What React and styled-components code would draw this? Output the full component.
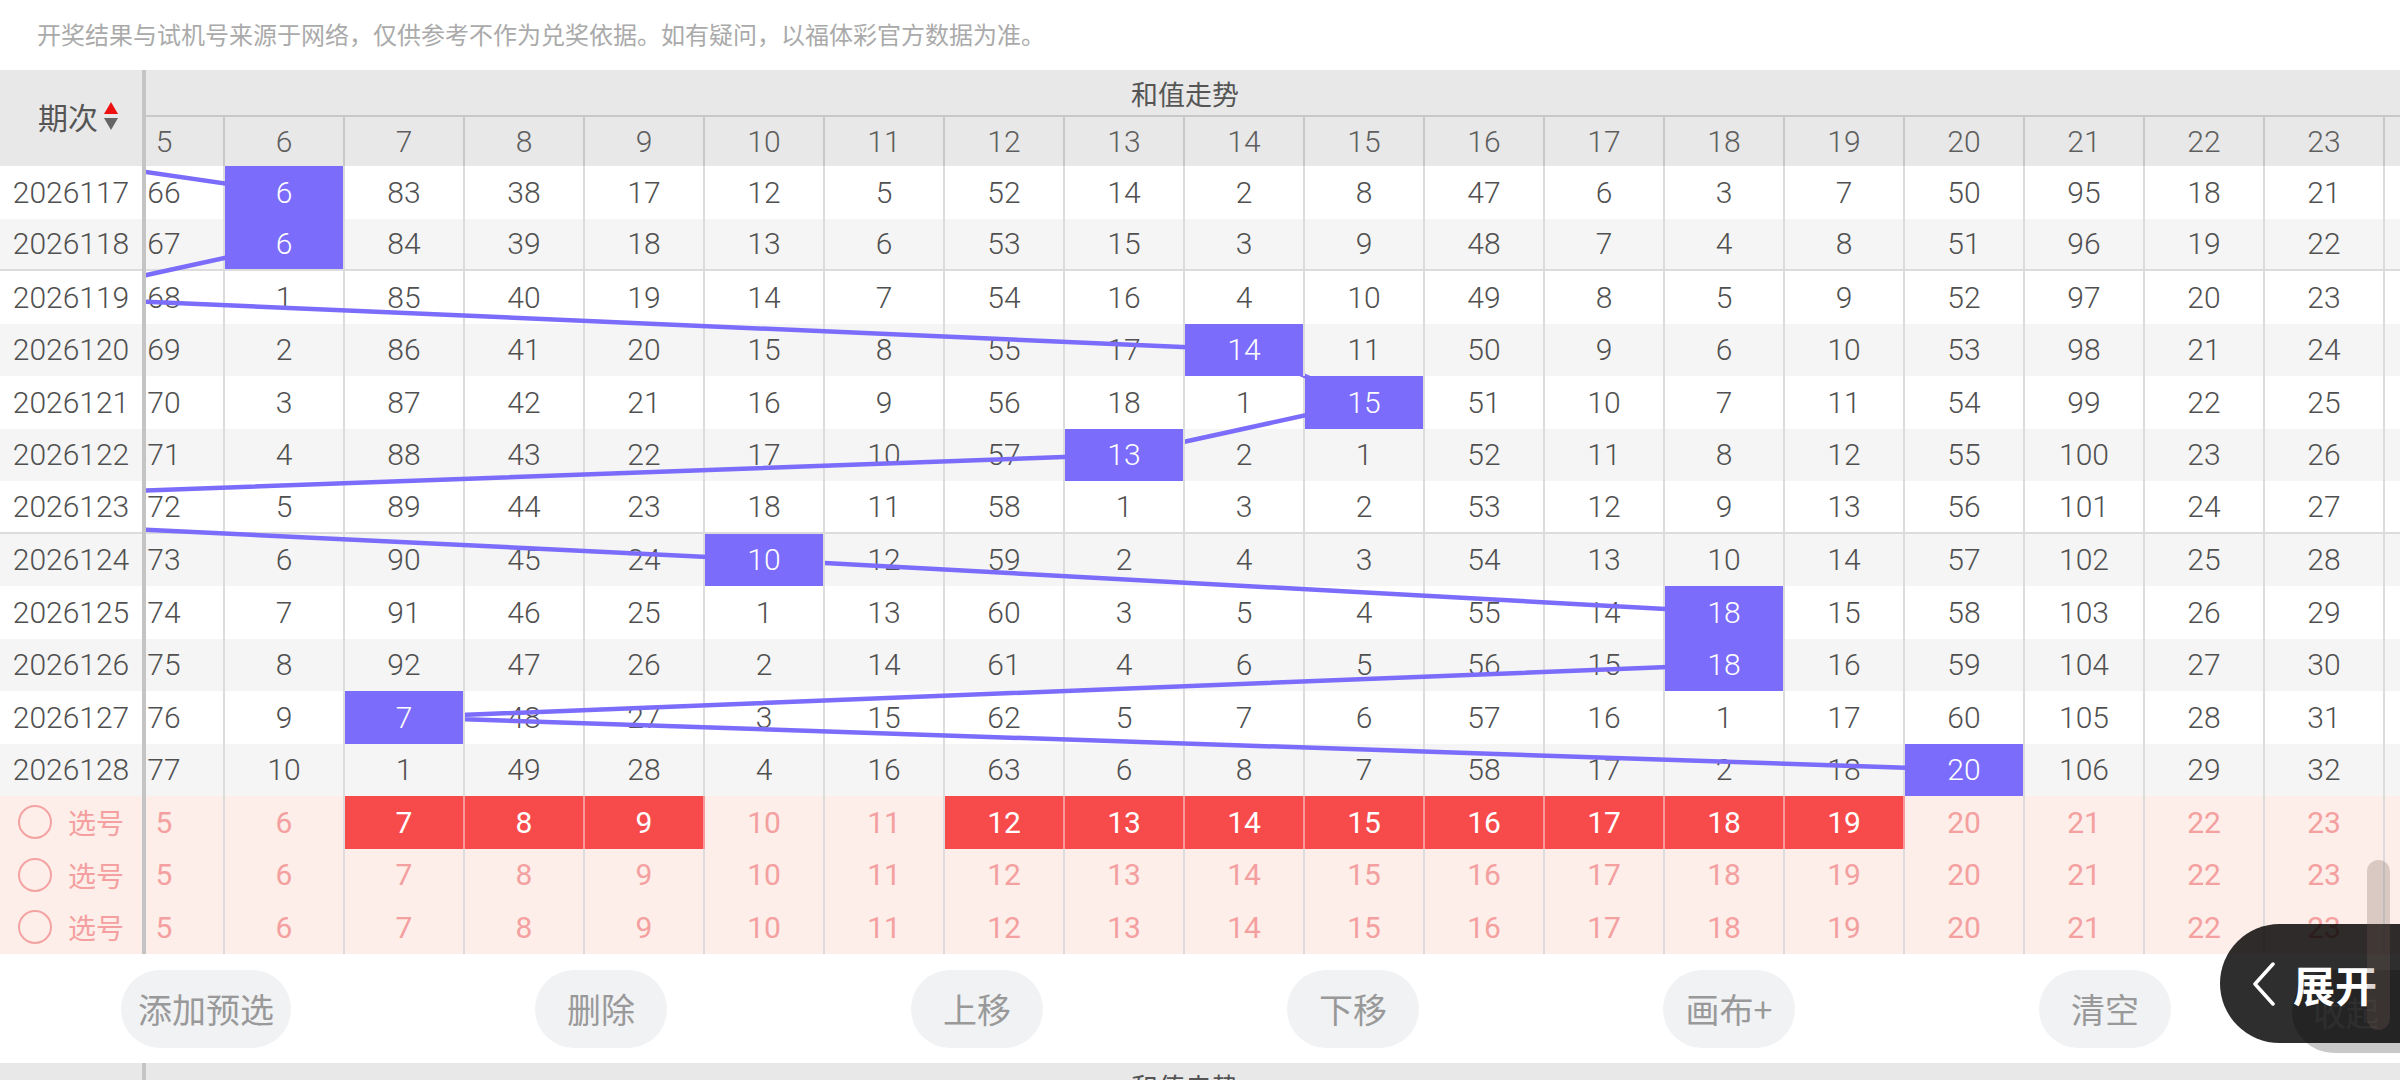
import React from 'react';
import styled, { createGlobalStyle, css } from 'styled-components';

const GlobalStyle = createGlobalStyle`
  html, body { margin: 0; padding: 0; background: #fff; overflow: hidden; }
  body { font-family: Roboto, "Noto Sans CJK SC", "Noto Sans", sans-serif; }
  * { box-sizing: border-box; }
`;

const COL_W = 120;
const ROW_H = 52.5;
const NUM_COLS = 28;
const SCROLL = 641;
const CONTENT_W = COL_W * NUM_COLS;
const HIGHLIGHT = '#7b6cfb';

const visibleRows = [
  ['2026117', [66, 6, 83, 38, 17, 12, 5, 52, 14, 2, 8, 47, 6, 3, 7, 50, 95, 18, 21]],
  ['2026118', [67, 6, 84, 39, 18, 13, 6, 53, 15, 3, 9, 48, 7, 4, 8, 51, 96, 19, 22]],
  ['2026119', [68, 1, 85, 40, 19, 14, 7, 54, 16, 4, 10, 49, 8, 5, 9, 52, 97, 20, 23]],
  ['2026120', [69, 2, 86, 41, 20, 15, 8, 55, 17, 14, 11, 50, 9, 6, 10, 53, 98, 21, 24]],
  ['2026121', [70, 3, 87, 42, 21, 16, 9, 56, 18, 1, 15, 51, 10, 7, 11, 54, 99, 22, 25]],
  ['2026122', [71, 4, 88, 43, 22, 17, 10, 57, 13, 2, 1, 52, 11, 8, 12, 55, 100, 23, 26]],
  ['2026123', [72, 5, 89, 44, 23, 18, 11, 58, 1, 3, 2, 53, 12, 9, 13, 56, 101, 24, 27]],
  ['2026124', [73, 6, 90, 45, 24, 10, 12, 59, 2, 4, 3, 54, 13, 10, 14, 57, 102, 25, 28]],
  ['2026125', [74, 7, 91, 46, 25, 1, 13, 60, 3, 5, 4, 55, 14, 18, 15, 58, 103, 26, 29]],
  ['2026126', [75, 8, 92, 47, 26, 2, 14, 61, 4, 6, 5, 56, 15, 18, 16, 59, 104, 27, 30]],
  ['2026127', [76, 9, 7, 48, 27, 3, 15, 62, 5, 7, 6, 57, 16, 1, 17, 60, 105, 28, 31]],
  ['2026128', [77, 10, 1, 49, 28, 4, 16, 63, 6, 8, 7, 58, 17, 2, 18, 20, 106, 29, 32]],
];

const hits = [6, 6, 4, 14, 15, 13, 1, 10, 18, 18, 7, 20];
const prevHit = 3;
const hiddenBase = { 0: 212, 1: 31, 2: 118, 3: 0, 4: 40, 24: 137, 25: 58, 26: 296, 27: 451 };

const rows = (() => {
  const counters = { ...hiddenBase };
  return visibleRows.map(([issue, vis], i) => {
    const cells = [];
    for (let c = 0; c < NUM_COLS; c++) {
      if (c >= 5 && c <= 23) {
        cells.push(vis[c - 5]);
      } else if (hits[i] === c) {
        counters[c] = 0;
        cells.push(c);
      } else {
        counters[c] += 1;
        cells.push(counters[c]);
      }
    }
    return { issue, cells, hit: hits[i], stripe: i % 2 === 1, sep: i === 1 || i === 6 };
  });
})();

const picked = new Set([7, 8, 9, 12, 13, 14, 15, 16, 17, 18, 19]);
const pickRows = [picked, new Set(), new Set()];

const trendPoints = [
  [prevHit * COL_W + COL_W / 2, -ROW_H / 2],
  ...hits.map((v, i) => [v * COL_W + COL_W / 2, i * ROW_H + ROW_H / 2]),
]
  .map(([x, y]) => `${x},${y}`)
  .join(' ');

/* ---------- layout ---------- */

const Page = styled.div`
  position: relative;
  width: 2400px;
`;

const Notice = styled.div`
  height: 70px;
  display: flex;
  align-items: center;
  padding: 0 0 4px 37px;
  font-family: "Noto Sans CJK SC", sans-serif;
  font-size: 24px;
  color: #aaaaaa;
`;

const Table = styled.div`
  display: flex;
  width: 2400px;
`;

const LeftCol = styled.div`
  flex: 0 0 146px;
  border-right: 4px solid #c4c4c4;
`;

const RightPane = styled.div`
  flex: 1;
  overflow: hidden;
`;

const ScrollContent = styled.div`
  width: ${CONTENT_W}px;
  margin-left: -${SCROLL}px;
`;

/* ---------- header ---------- */

const CornerCell = styled.div`
  height: 96px;
  background: #e8e8e8;
  display: flex;
  align-items: center;
  justify-content: center;
  gap: 6px;
  padding: 0 0 4px 14px;
  font-family: "Noto Sans CJK SC", sans-serif;
  font-size: 30px;
  color: #555;
`;

const SortIcon = styled.span`
  display: flex;
  flex-direction: column;
  gap: 4px;
  &::before,
  &::after {
    content: '';
    width: 0;
    height: 0;
    border-left: 7px solid transparent;
    border-right: 7px solid transparent;
  }
  &::before { border-bottom: 12px solid #ee1111; }
  &::after { border-top: 12px solid #666; }
`;

const TitleRow = styled.div`
  height: 47px;
  background: #e8e8e8;
  border-bottom: 2px solid #c8c8c8;
  display: flex;
  align-items: center;
  justify-content: center;
  padding-top: 1px;
  font-family: "Noto Sans CJK SC", sans-serif;
  font-size: 27px;
  color: #555;
`;

const HeadRow = styled.div`
  height: 49px;
  display: flex;
  background: #e8e8e8;
`;

const digitFont = css`
  font-family: Roboto, "Noto Sans", sans-serif;
  font-weight: 300;
  font-size: 30px;
`;

const HeadCell = styled.div`
  flex: 0 0 ${COL_W}px;
  border-right: 2px solid #c8c8c8;
  display: flex;
  align-items: center;
  justify-content: center;
  ${digitFont};
  color: #5e5e5e;
`;

/* ---------- body ---------- */

const rowBase = css`
  height: ${ROW_H}px;
  background: ${(p) => (p.$stripe ? '#f5f5f5' : '#fff')};
  border-bottom: ${(p) => (p.$sep ? '2px solid #dcdcdc' : 'none')};
`;

const IssueCell = styled.div`
  ${rowBase};
  display: flex;
  align-items: center;
  justify-content: center;
  ${digitFont};
  color: #505050;
`;

const Body = styled.div`
  position: relative;
`;

const DataRow = styled.div`
  ${rowBase};
  display: flex;
`;

const Cell = styled.div`
  flex: 0 0 ${COL_W}px;
  border-right: 2px solid #dcdcdc;
  display: flex;
  align-items: center;
  justify-content: center;
  ${digitFont};
  color: #505050;
  ${(p) =>
    p.$hit &&
    css`
      position: relative;
      z-index: 2;
      background: ${HIGHLIGHT};
      color: #fff;
    `}
`;

const TrendSvg = styled.svg`
  position: absolute;
  top: 0;
  left: 0;
  z-index: 1;
  pointer-events: none;
`;

/* ---------- pick rows ---------- */

const PickLabel = styled.div`
  height: ${ROW_H}px;
  background: #fdeee9;
  display: flex;
  align-items: center;
  gap: 16px;
  padding-left: 18px;
  font-family: "Noto Sans CJK SC", sans-serif;
  font-size: 28px;
  color: #f4a0a0;
`;

const Circle = styled.span`
  width: 34px;
  height: 34px;
  border-radius: 50%;
  border: 2px solid #f4a3a3;
`;

const PickRow = styled.div`
  height: ${ROW_H}px;
  display: flex;
  background: #fdeee9;
`;

const PickCell = styled.div`
  flex: 0 0 ${COL_W}px;
  border-right: 2px solid ${(p) => (p.$on ? '#f79a9a' : '#dcdcdc')};
  display: flex;
  align-items: center;
  justify-content: center;
  ${digitFont};
  font-weight: 400;
  color: ${(p) => (p.$on ? '#fff' : '#f4a0a0')};
  background: ${(p) => (p.$on ? '#f74b4b' : 'transparent')};
`;

/* ---------- buttons ---------- */

const ButtonBar = styled.div`
  height: 109.5px;
  display: flex;
  align-items: flex-start;
  gap: 244px;
  padding: 16px 0 0 121px;
`;

const Button = styled.button`
  height: 78px;
  min-width: 132px;
  padding: 0 17px;
  border: none;
  border-radius: 39px;
  background: #f1f2f4;
  color: #999;
  font-family: "Noto Sans CJK SC", sans-serif;
  font-size: 34px;
  white-space: nowrap;
`;

/* ---------- overlays ---------- */

const CollapseButton = styled.div`
  position: absolute;
  top: 970px;
  left: 2292px;
  width: 170px;
  height: 83px;
  border-radius: 42px;
  background: #c8c8c8;
  color: #fff;
  display: flex;
  align-items: center;
  padding-left: 21px;
  font-family: "Noto Sans CJK SC", sans-serif;
  font-size: 33px;
  z-index: 5;
`;

const ExpandPill = styled.div`
  position: absolute;
  top: 924px;
  right: 0;
  width: 180px;
  height: 119px;
  border-radius: 60px 0 0 60px;
  background: rgba(0, 0, 0, 0.82);
  display: flex;
  align-items: center;
  gap: 17px;
  padding-left: 32px;
  color: #fff;
  font-family: "Noto Sans CJK SC", sans-serif;
  font-weight: 700;
  font-size: 42px;
  z-index: 6;
`;

const ScrollThumb = styled.div`
  position: absolute;
  top: 860px;
  left: 2367px;
  width: 23px;
  height: 170px;
  border-radius: 12px;
  background: rgba(120, 95, 90, 0.26);
  z-index: 7;
`;

function Header() {
  return (
    <Table>
      <LeftCol>
        <CornerCell>
          期次
          <SortIcon />
        </CornerCell>
      </LeftCol>
      <RightPane>
        <ScrollContent>
          <TitleRow>和值走势</TitleRow>
          <HeadRow>
            {Array.from({ length: NUM_COLS }, (_, c) => (
              <HeadCell key={c}>{c}</HeadCell>
            ))}
          </HeadRow>
        </ScrollContent>
      </RightPane>
    </Table>
  );
}

export default function App() {
  return (
    <Page>
      <GlobalStyle />
      <Notice>开奖结果与试机号来源于网络，仅供参考不作为兑奖依据。如有疑问，以福体彩官方数据为准。</Notice>

      <Header />

      <Table>
        <LeftCol>
          {rows.map((r) => (
            <IssueCell key={r.issue} $stripe={r.stripe} $sep={r.sep}>
              {r.issue}
            </IssueCell>
          ))}
          {pickRows.map((_, i) => (
            <PickLabel key={i}>
              <Circle />
              选号
            </PickLabel>
          ))}
        </LeftCol>
        <RightPane>
          <ScrollContent>
            <Body>
              {rows.map((r) => (
                <DataRow key={r.issue} $stripe={r.stripe} $sep={r.sep}>
                  {r.cells.map((v, c) => (
                    <Cell key={c} $hit={r.hit === c}>
                      {v}
                    </Cell>
                  ))}
                </DataRow>
              ))}
              <TrendSvg width={CONTENT_W} height={ROW_H * rows.length} viewBox={`0 0 ${CONTENT_W} ${ROW_H * rows.length}`}>
                <polyline points={trendPoints} fill="none" stroke={HIGHLIGHT} strokeWidth="4.5" strokeLinejoin="round" />
              </TrendSvg>
            </Body>
            {pickRows.map((set, i) => (
              <PickRow key={i}>
                {Array.from({ length: NUM_COLS }, (_, c) => (
                  <PickCell key={c} $on={set.has(c)}>
                    {c}
                  </PickCell>
                ))}
              </PickRow>
            ))}
          </ScrollContent>
        </RightPane>
      </Table>

      <ButtonBar>
        <Button>添加预选</Button>
        <Button>删除</Button>
        <Button>上移</Button>
        <Button>下移</Button>
        <Button>画布+</Button>
        <Button>清空</Button>
      </ButtonBar>

      <Header />

      <CollapseButton>收起</CollapseButton>
      <ExpandPill>
        <svg width="24" height="44" viewBox="0 0 24 44">
          <path d="M21 2 L3 22 L21 42" fill="none" stroke="#fff" strokeWidth="3.5" strokeLinecap="round" strokeLinejoin="round" />
        </svg>
        展开
      </ExpandPill>
      <ScrollThumb />
    </Page>
  );
}
